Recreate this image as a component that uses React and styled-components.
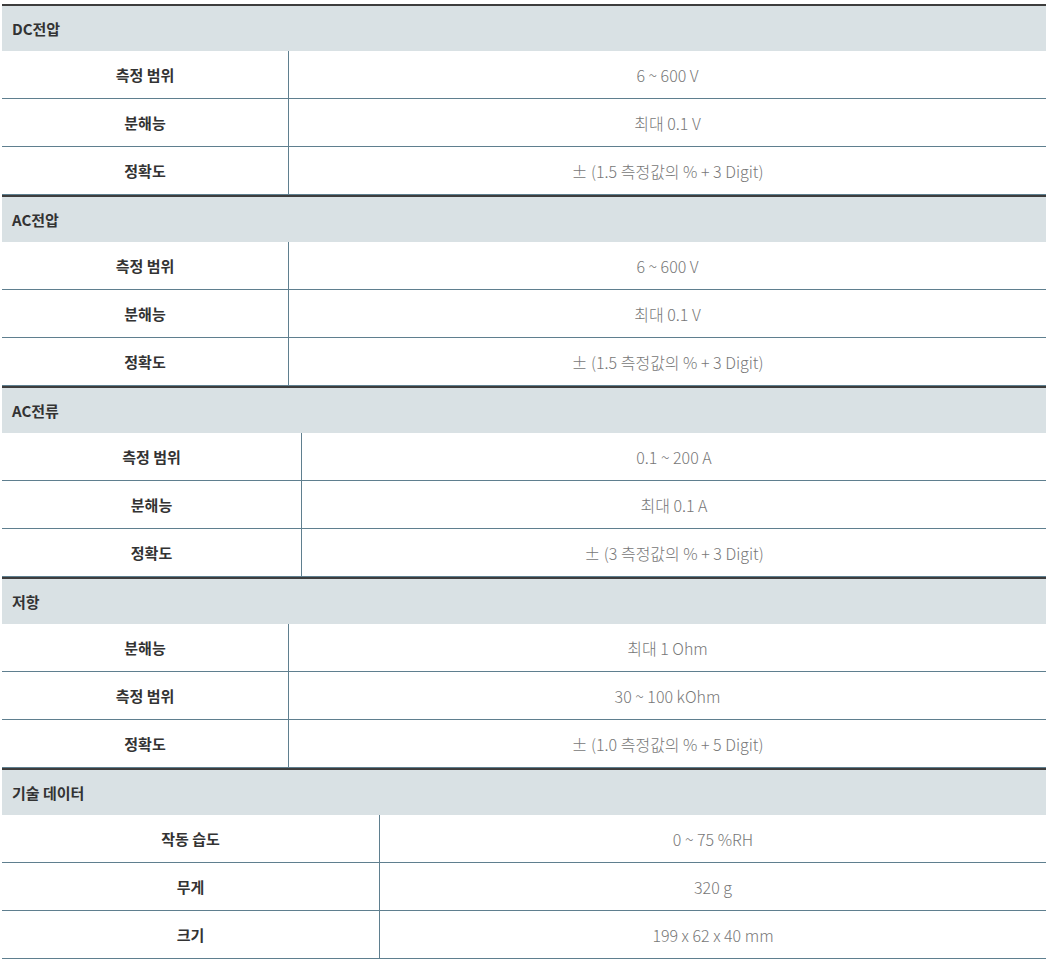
import React from 'react'
import styled, { createGlobalStyle } from 'styled-components'

const GlobalStyle = createGlobalStyle`
  body {
    margin: 0;
    padding: 4px 2px 0 2px;
    background: #fff;
    font-family: "Noto Sans CJK KR", "Noto Sans", sans-serif;
  }
`

const sections = [
  {
    title: 'DC전압',
    labelWidth: 287,
    rows: [
      ['측정 범위', '6 ~ 600 V'],
      ['분해능', '최대 0.1 V'],
      ['정확도', '± (1.5 측정값의 % + 3 Digit)'],
    ],
  },
  {
    title: 'AC전압',
    labelWidth: 287,
    rows: [
      ['측정 범위', '6 ~ 600 V'],
      ['분해능', '최대 0.1 V'],
      ['정확도', '± (1.5 측정값의 % + 3 Digit)'],
    ],
  },
  {
    title: 'AC전류',
    labelWidth: 300,
    rows: [
      ['측정 범위', '0.1 ~ 200 A'],
      ['분해능', '최대 0.1 A'],
      ['정확도', '± (3 측정값의 % + 3 Digit)'],
    ],
  },
  {
    title: '저항',
    labelWidth: 287,
    rows: [
      ['분해능', '최대 1 Ohm'],
      ['측정 범위', '30 ~ 100 kOhm'],
      ['정확도', '± (1.0 측정값의 % + 5 Digit)'],
    ],
  },
  {
    title: '기술 데이터',
    labelWidth: 378,
    rows: [
      ['작동 습도', '0 ~ 75 %RH'],
      ['무게', '320 g'],
      ['크기', '199 x 62 x 40 mm'],
    ],
  },
]

const Page = styled.div`
  width: 1044px;
`

const Section = styled.section`
  border-top: 2px solid #3d3d3d;
`

const SectionHead = styled.div`
  height: 45px;
  display: flex;
  align-items: center;
  padding-left: 10px;
  background: #d9e1e4;
  color: #333;
  font-size: 15px;
  font-weight: 700;
`

const Row = styled.div`
  display: grid;
  grid-template-columns: ${p => p.$labelWidth}px 1fr;
  height: 48px;
  border-bottom: 1px solid #5f7f8f;
  box-sizing: border-box;
  &:first-of-type {
    height: 47px;
  }
`

const Label = styled.div`
  display: flex;
  align-items: center;
  justify-content: center;
  border-right: 1px solid #5f7f8f;
  color: #333;
  font-size: 15px;
  font-weight: 700;
`

const Value = styled.div`
  display: flex;
  align-items: center;
  justify-content: center;
  color: #777;
  font-size: 16px;
  font-weight: 300;
`

export default function App() {
  return (
    <Page>
      <GlobalStyle />
      {sections.map(s => (
        <Section key={s.title}>
          <SectionHead>{s.title}</SectionHead>
          {s.rows.map(([label, value]) => (
            <Row key={label} $labelWidth={s.labelWidth}>
              <Label>{label}</Label>
              <Value>{value}</Value>
            </Row>
          ))}
        </Section>
      ))}
    </Page>
  )
}
